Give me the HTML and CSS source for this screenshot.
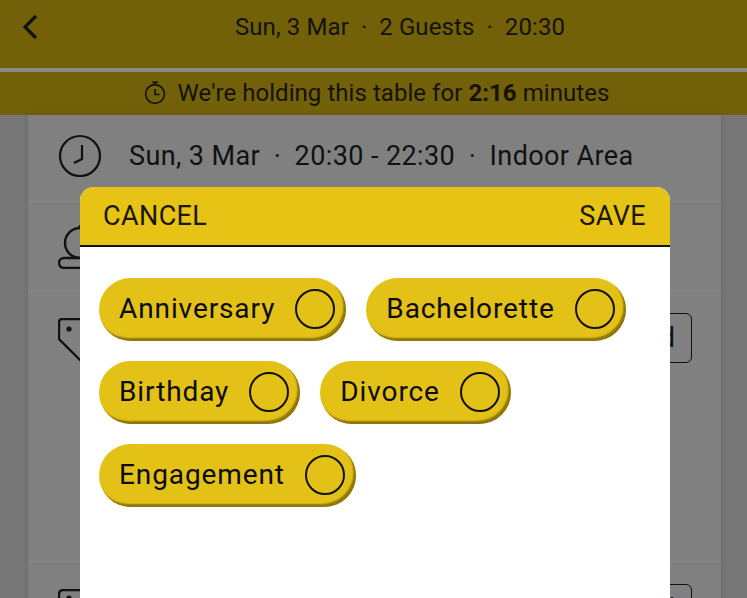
FILE: index.html
```html
<!DOCTYPE html>
<html lang="en">
<head>
    <meta charset="UTF-8">
    <meta name="viewport" content="width=device-width, initial-scale=1.0">
    <title>Occasion</title>
    <link rel="stylesheet" href="styles.css">
</head>
<body>
    <div class="screen">
        <div class="top-bar">
            <svg class="back-icon" width="18" height="28" viewBox="0 0 18 28"><path d="M15 3 L4 14 L15 25" fill="none" stroke="#111" stroke-width="3.2"/></svg>
            <div class="top-title">Sun, 3 Mar<span class="dot">·</span>2 Guests<span class="dot">·</span>20:30</div>
        </div>
        <div class="timer-bar">
            <svg width="24" height="25" viewBox="0 0 24 25" fill="none" stroke="#111" stroke-width="1.6"><circle cx="12" cy="14" r="9.4"/><path d="M9 2.2h6M12 2.2v2.4M12 9v5.5h4.5"/></svg>
            <span>We're holding this table for <b>2:16</b> minutes</span>
        </div>
        <div class="content">
            <div class="card">
                <div class="row row-time">
                    <svg width="44" height="44" viewBox="0 0 44 44" fill="none" stroke="#111" stroke-width="2.2"><circle cx="22" cy="22" r="20"/><path d="M24 11v14l-8 4"/></svg>
                    <span>Sun, 3 Mar<span class="dot-wide">·</span>20:30 - 22:30<span class="dot-wide">·</span>Indoor Area</span>
                </div>
                <div class="row row-bell">
                    <svg width="44" height="44" viewBox="0 0 44 44" fill="none" stroke="#111" stroke-width="2.4"><circle cx="22" cy="18" r="15"/><path d="M22 3V0"/><path d="M6 33h32a5 5 0 0 1 0 10H6a5 5 0 0 1 0-10z" fill="#808080"/></svg>
                </div>
                <div class="row row-tag">
                    <svg width="44" height="48" viewBox="0 0 44 48" fill="none" stroke="#111" stroke-width="2.4"><path d="M4 1h24l14 14v14L24 44 1 21V4a3 3 0 0 1 3-3z"/><circle cx="11" cy="11" r="2.6" fill="#111" stroke="none"/></svg>
                    <div class="ghost-btn">Add</div>
                </div>
                <div class="row row-note">
                    <svg width="44" height="48" viewBox="0 0 44 48" fill="none" stroke="#111" stroke-width="2.4"><rect x="1" y="1" width="42" height="42" rx="4"/><circle cx="11" cy="9" r="2.6" fill="#111" stroke="none"/></svg>
                    <div class="ghost-btn">Add</div>
                </div>
            </div>
        </div>
        <div class="modal">
            <div class="modal-header">
                <span>CANCEL</span>
                <span>SAVE</span>
            </div>
            <div class="modal-body">
                <div class="pill">Anniversary<span class="radio"></span></div>
                <div class="pill">Bachelorette<span class="radio"></span></div>
                <div class="pill">Birthday<span class="radio"></span></div>
                <div class="pill">Divorce<span class="radio"></span></div>
                <div class="pill">Engagement<span class="radio"></span></div>
            </div>
        </div>
    </div>
</body>
</html>
```

FILE: styles.css
```css
* {
    box-sizing: border-box;
}
html, body {
    margin: 0;
    height: 100%;
    overflow: hidden;
}
body {
    font-family: Roboto, sans-serif;
    color: #111;
    background: #777;
}
.screen {
    position: relative;
    width: 747px;
    height: 598px;
    overflow: hidden;
    display: flex;
    flex-direction: column;
}
.top-bar {
    height: 68px;
    flex: none;
    background: #736109;
    display: flex;
    align-items: center;
    justify-content: center;
    position: relative;
    padding-bottom: 14px;
    padding-left: 53px;
    font-size: 24px;
    letter-spacing: 0.1px;
    color: #14120a;
}
.back-icon {
    position: absolute;
    left: 21px;
    top: 13px;
}
.dot {
    margin: 0 12px;
}
.dot-wide {
    margin: 0 13.5px;
}
.timer-bar {
    margin-top: 4px;
    height: 43px;
    flex: none;
    background: #736109;
    box-shadow: 0 -4px 0 #8a8a8a;
    display: flex;
    align-items: center;
    justify-content: center;
    gap: 11px;
    padding: 0 0 2px 5px;
    font-size: 24px;
    letter-spacing: 0.05px;
    color: #14120a;
}
.timer-bar b {
    font-weight: 700;
}
.content {
    flex: 1;
    padding: 0 26px 0 28px;
    background: #777;
}
.card {
    height: 100%;
    background: #808080;
    box-shadow: 0 0 6px rgba(0,0,0,0.12);
}
.row {
    display: flex;
    align-items: center;
    gap: 27px;
    padding: 0 29px 0 30px;
    border-bottom: 1px solid #868686;
    font-size: 27px;
    letter-spacing: 0.4px;
    color: #111;
}
.row-time {
    height: 87px;
    padding-bottom: 4px;
}
.row-bell {
    height: 90px;
}
.row-tag {
    height: 270px;
    align-items: flex-start;
    justify-content: space-between;
    padding-top: 26px;
}
.row-note {
    padding-top: 27px;
    align-items: flex-start;
    justify-content: space-between;
    border-bottom: none;
}
.ghost-btn {
    width: 80px;
    height: 50px;
    margin-top: -5px;
    border: 1.5px solid #111;
    border-radius: 6px;
    display: flex;
    align-items: center;
    justify-content: flex-end;
    padding-right: 16px;
    font-size: 27px;
    letter-spacing: 0;
}
.modal {
    position: absolute;
    left: 80px;
    top: 187px;
    width: 590px;
    height: 411px;
    background: #fff;
    border-radius: 14px 14px 0 0;
    overflow: hidden;
}
.modal-header {
    height: 60px;
    background: #e6c315;
    border-bottom: 2px solid #111;
    display: flex;
    align-items: center;
    justify-content: space-between;
    padding: 0 24px 0 23px;
    font-size: 27px;
    letter-spacing: 0.4px;
    color: #1a1703;
}
.modal-body {
    display: flex;
    flex-wrap: wrap;
    align-items: flex-start;
    gap: 20px;
    padding: 31px 19px;
}
.pill {
    height: 63px;
    display: flex;
    align-items: center;
    gap: 20px;
    padding: 0 11px 2px 20px;
    border-radius: 32px;
    background: #e3c116;
    box-shadow: inset -2.5px -3px 1.5px #8d770e;
    font-size: 28px;
    letter-spacing: 0.9px;
    color: #0c0c0c;
}
.radio {
    width: 40px;
    height: 40px;
    border: 2px solid #111;
    border-radius: 50%;
}
```
